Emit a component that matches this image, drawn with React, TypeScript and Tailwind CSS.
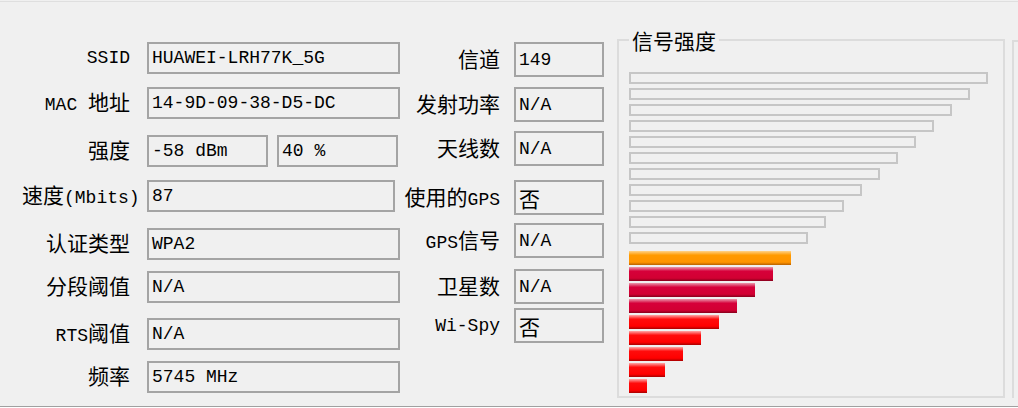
import type { ReactNode } from 'react'

const CJK = /([\u3000-\u9fff\uff00-\uffef]+)/

// Latin runs stay in the mono font, Chinese runs get the wider CJK face
function Txt({ s }: { s: string }) {
  return (
    <>
      {s
        .split(CJK)
        .filter(Boolean)
        .map((part, i) =>
          CJK.test(part) ? (
            <span key={i} className="font-['Noto_Sans_CJK_SC',sans-serif] text-[21px]">
              {part}
            </span>
          ) : (
            <span key={i}>{part}</span>
          ),
        )}
    </>
  )
}

function Box({ value, className }: { value: string; className: string }) {
  return (
    <div
      className={`flex items-center border-2 border-[#a4a4a4] pl-[3px] whitespace-nowrap overflow-hidden ${className}`}
    >
      <Txt s={value} />
    </div>
  )
}

function LeftRow({ label, mt, children }: { label: string; mt: string; children: ReactNode }) {
  return (
    <div className={`flex items-center h-[32px] ${mt}`}>
      <div className="w-[130px] text-right whitespace-nowrap">
        <Txt s={label} />
      </div>
      <div className="ml-[17px] flex gap-[9px]">{children}</div>
    </div>
  )
}

const midRows = [
  { label: '信道', value: '149', mt: 'mt-0' },
  { label: '发射功率', value: 'N/A', mt: 'mt-[10px]' },
  { label: '天线数', value: 'N/A', mt: 'mt-[9px]' },
  { label: '使用的GPS', value: '否', mt: 'mt-[14px]' },
  { label: 'GPS信号', value: 'N/A', mt: 'mt-[8px]' },
  { label: '卫星数', value: 'N/A', mt: 'mt-[11px]' },
  { label: 'Wi-Spy', value: '否', mt: 'mt-[4px]' },
]

const grayBars = [359, 341, 323, 305, 287, 269, 251, 233, 215, 197, 179]

const ORANGE = 'bg-[linear-gradient(to_bottom,#ffd38a_0%,#ff9a00_30%,#ff9400_80%,#b86000_100%)]'
const CRIMSON = 'bg-[linear-gradient(to_bottom,#eb98ac_0%,#d6003a_30%,#d20032_80%,#86001c_100%)]'
const RED = 'bg-[linear-gradient(to_bottom,#ffa8a8_0%,#ff0c0c_30%,#ff0000_80%,#a80000_100%)]'

const colorBars = [
  { w: 162, c: ORANGE },
  { w: 144, c: CRIMSON },
  { w: 126, c: CRIMSON },
  { w: 108, c: CRIMSON },
  { w: 90, c: RED },
  { w: 72, c: RED },
  { w: 54, c: RED },
  { w: 36, c: RED },
  { w: 18, c: RED },
]

export default function App() {
  return (
    <div className="w-[1018px] h-[408px] flex flex-col bg-[#f0f0f0] text-black text-[18px] leading-[22px] font-['Liberation_Mono','Noto_Sans_CJK_SC',monospace]">
      <div className="h-px mt-px bg-[#dfdfdf]" />

      <div className="flex flex-1">
        <div className="w-[400px] pt-[40px]">
          <LeftRow label="SSID" mt="mt-0">
            <Box value="HUAWEI-LRH77K_5G" className="w-[253px] h-[32px]" />
          </LeftRow>
          <LeftRow label="MAC 地址" mt="mt-[13px]">
            <Box value="14-9D-09-38-D5-DC" className="w-[253px] h-[32px]" />
          </LeftRow>
          <LeftRow label="强度" mt="mt-[16px]">
            <Box value="-58 dBm" className="w-[121px] h-[32px] pl-0" />
            <Box value="40 %" className="w-[121px] h-[32px]" />
          </LeftRow>
          <div className="flex items-center h-[32px] mt-[13px]">
            <div className="w-[137px] pl-[22px] whitespace-nowrap">
              <Txt s="速度(Mbits)" />
            </div>
            <Box value="87" className="ml-[10px] w-[248px] h-[32px] pl-0" />
          </div>
          <LeftRow label="认证类型" mt="mt-[16px]">
            <Box value="WPA2" className="w-[253px] h-[32px]" />
          </LeftRow>
          <LeftRow label="分段阈值" mt="mt-[11px]">
            <Box value="N/A" className="w-[253px] h-[32px]" />
          </LeftRow>
          <LeftRow label="RTS阈值" mt="mt-[15px]">
            <Box value="N/A" className="w-[253px] h-[32px]" />
          </LeftRow>
          <LeftRow label="频率" mt="mt-[11px]">
            <Box value="5745 MHz" className="w-[253px] h-[32px]" />
          </LeftRow>
        </div>

        <div className="w-[204px] pt-[40px]">
          {midRows.map((r) => (
            <div key={r.label} className={`flex items-center h-[35px] ${r.mt}`}>
              <div className="w-[100px] text-right whitespace-nowrap">
                <Txt s={r.label} />
              </div>
              <Box value={r.value} className="ml-[14px] w-[90px] h-[35px]" />
            </div>
          ))}
        </div>

        <fieldset className="ml-[13px] mt-[27px] w-[388px] h-[369px] border-2 border-[#dcdcdc] pl-[10px]">
          <legend className="px-[3px] font-['Noto_Sans_CJK_SC',sans-serif] text-[21px] leading-[22px]">
            信号强度
          </legend>
          <div className="pt-[21px] flex flex-col">
            <div className="flex flex-col gap-[4px]">
              {grayBars.map((w) => (
                <div key={w} className="h-[12px] border-2 border-[#c6c6c6]" style={{ width: w }} />
              ))}
            </div>
            <div className="mt-[7px] flex flex-col gap-[2px]">
              {colorBars.map((b) => (
                <div key={b.w} className={`h-[14px] ${b.c}`} style={{ width: b.w }} />
              ))}
            </div>
          </div>
        </fieldset>

        <div className="ml-[7px] mt-[38px] h-[358px] flex-1 border-l-2 border-t-2 border-[#dcdcdc]" />
      </div>

      <div className="h-px bg-[#a0a0a0]" />
      <div className="h-px bg-white" />
    </div>
  )
}
